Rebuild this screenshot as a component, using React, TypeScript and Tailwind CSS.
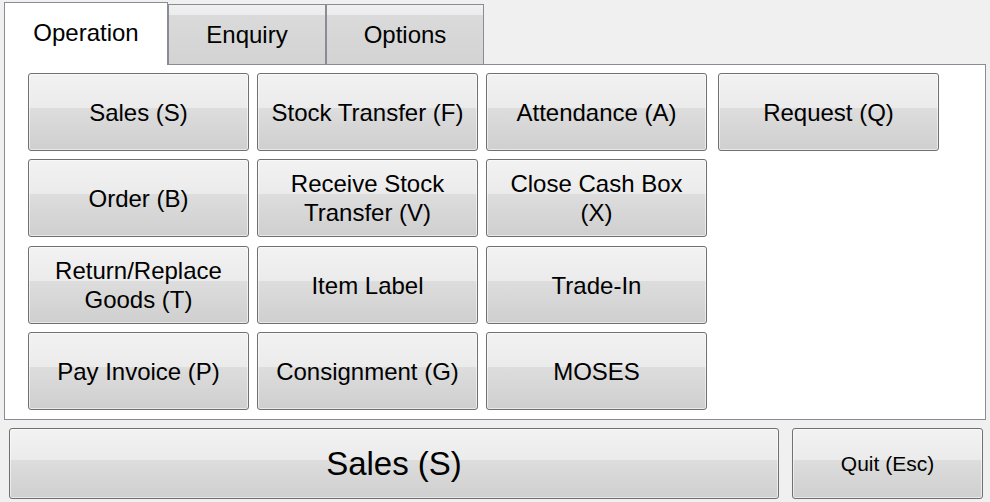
import React from 'react';

// Win7-style glossy button face
const face =
  'border border-[#707070] rounded-[3px] bg-[linear-gradient(to_bottom,#f2f2f2_0%,#ebebeb_45%,#dddddd_45%,#cfcfcf_100%)] shadow-[inset_0_0_0_1px_rgba(255,255,255,0.55)] text-black flex items-center justify-center text-center';

const grid: (string | null)[][] = [
  ['Sales (S)', 'Stock Transfer (F)', 'Attendance (A)', 'Request (Q)'],
  ['Order (B)', 'Receive Stock\nTransfer (V)', 'Close Cash Box\n(X)', null],
  ['Return/Replace\nGoods (T)', 'Item Label', 'Trade-In', null],
  ['Pay Invoice (P)', 'Consignment (G)', 'MOSES', null],
];

const tabs = ['Operation', 'Enquiry', 'Options'];

export default function App() {
  return (
    <div
      className="w-[990px] h-[502px] bg-[#f0f0f0] overflow-hidden"
      style={{ fontFamily: '"Liberation Sans", Arial, sans-serif' }}
    >
      {/* tab strip */}
      <div className="h-[64px] pl-[4px] flex items-end">
        {tabs.map((t, i) =>
          i === 0 ? (
            <div
              key={t}
              className="relative z-10 -mb-px w-[164px] h-[63px] bg-white border-l border-t border-r border-[#898c95] flex items-center justify-center text-[24px] pb-[2px]"
            >
              {t}
            </div>
          ) : (
            <div
              key={t}
              className="w-[158px] h-[60px] border-l border-t border-r border-[#898c95] bg-[linear-gradient(to_bottom,#f0f0f0_0%,#ebebeb_17%,#dadada_17%,#d3d3d3_100%)] flex items-center justify-center text-[24px]"
            >
              {t}
            </div>
          )
        )}
      </div>

      {/* tab page */}
      <div className="ml-[4px] w-[982px] h-[356px] bg-white border border-[#898c95] pl-[23px] pt-[8px]">
        <div className="grid grid-cols-[221px_221px_221px_224px] grid-rows-[78px_78px_79px_78px] gap-x-[8px] gap-y-[8px]">
          {grid.flatMap((row, r) =>
            row.map((label, c) =>
              label ? (
                <div
                  key={`${r}-${c}`}
                  className={`${face} h-[78px] text-[24px] leading-[29px] whitespace-pre-line ${c === 3 ? 'ml-[3px]' : ''} ${r === 2 ? 'self-end' : ''}`}
                >
                  {label}
                </div>
              ) : (
                <div key={`${r}-${c}`} />
              )
            )
          )}
        </div>
      </div>

      {/* bottom buttons */}
      <div className="flex pl-[9px] pt-[8px] gap-[13px]">
        <div className={`${face} w-[770px] h-[71px] text-[33px]`}>Sales (S)</div>
        <div className={`${face} w-[191px] h-[71px] text-[21px]`}>Quit (Esc)</div>
      </div>
    </div>
  );
}
